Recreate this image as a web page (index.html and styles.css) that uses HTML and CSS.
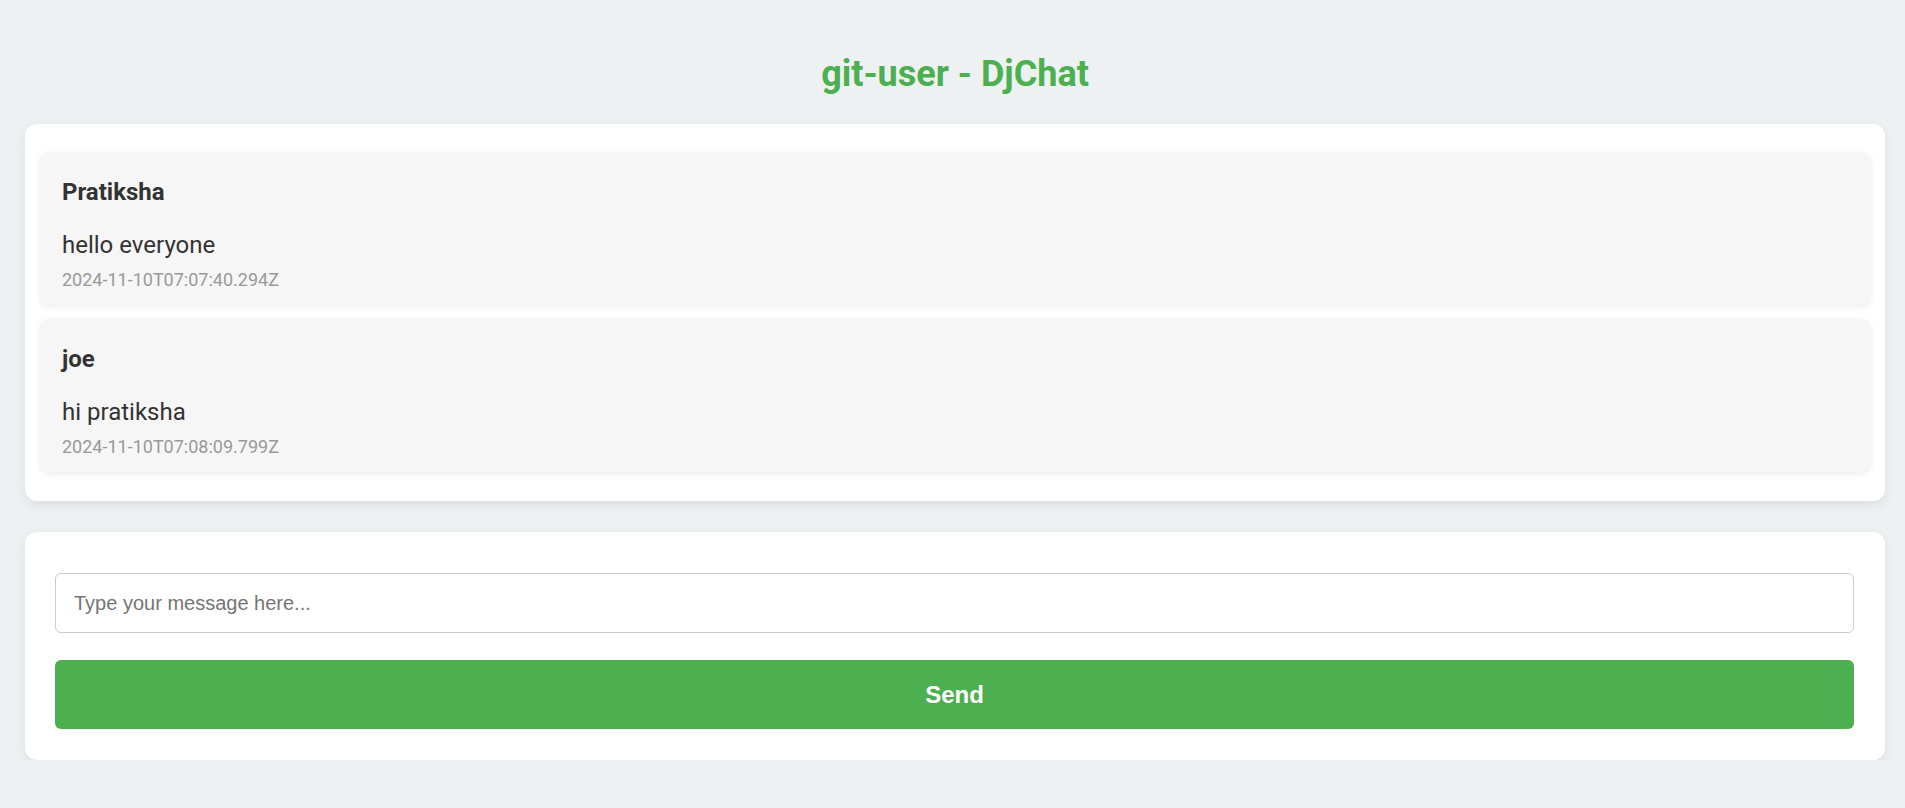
FILE: index.html
```html
<!DOCTYPE html>
<html lang="en">
<head>
<meta charset="utf-8">
<title>git-user - DjChat</title>
<link rel="stylesheet" href="styles.css">
</head>
<body>
<div class="page">
  <h1 class="title">git-user - DjChat</h1>
  <div class="card chat-log">
    <div class="message">
      <p class="author">Pratiksha</p>
      <p class="text">hello everyone</p>
      <p class="time">2024-11-10T07:07:40.294Z</p>
    </div>
    <div class="message">
      <p class="author">joe</p>
      <p class="text">hi pratiksha</p>
      <p class="time">2024-11-10T07:08:09.799Z</p>
    </div>
  </div>
  <form class="card composer">
    <input class="input" type="text" placeholder="Type your message here...">
    <button class="send" type="button">Send</button>
  </form>
</div>
</body>
</html>
```

FILE: styles.css
```css
* { box-sizing: border-box; }
html, body { margin: 0; padding: 0; }
body {
  background: #edf1f2;
  font-family: Roboto, "Liberation Sans", Arial, sans-serif;
  color: #333;
}
.page {
  padding: 0 20px 0 25px;
  display: flex;
  flex-direction: column;
}
.title {
  margin: 53px 0 29px;
  font-size: 36px;
  line-height: 42px;
  font-weight: 700;
  color: #4caf50;
  text-align: center;
}
.card {
  background: #fff;
  border-radius: 12px;
  box-shadow: 0 4px 12px rgba(0, 0, 0, 0.08);
}
.chat-log {
  padding: 28px 14px 29px 15px;
  display: flex;
  flex-direction: column;
  gap: 14px;
}
.message {
  background: #f6f6f6;
  border-radius: 10px;
  padding: 26px 22px 15px;
  box-shadow: 0 2px 7px rgba(0, 0, 0, 0.08);
}
.message p { margin: 0; }
.author {
  font-size: 24px;
  line-height: 28px;
  font-weight: 700;
  color: #333;
  margin-bottom: 25px !important;
}
.text {
  font-size: 24px;
  line-height: 28px;
  color: #333;
  margin-bottom: 10px !important;
}
.time {
  font-size: 18px;
  line-height: 21px;
  color: #999;
}
.composer {
  margin: 31px 0 0;
  padding: 41px 31px 31px 30px;
  display: flex;
  flex-direction: column;
  gap: 27px;
}
.input {
  height: 60px;
  width: 100%;
  border: 1px solid #ccc;
  border-radius: 6px;
  padding: 0 18px;
  font-family: "Liberation Sans", Arial, sans-serif;
  font-size: 20px;
  color: #333;
  background: #fff;
  outline: none;
}
.input::placeholder { color: #757575; }
.send {
  height: 69px;
  width: 100%;
  border: none;
  border-radius: 6px;
  background: #4caf50;
  color: #fff;
  font-family: "Liberation Sans", Arial, sans-serif;
  font-size: 24px;
  font-weight: 700;
  cursor: pointer;
}
```
